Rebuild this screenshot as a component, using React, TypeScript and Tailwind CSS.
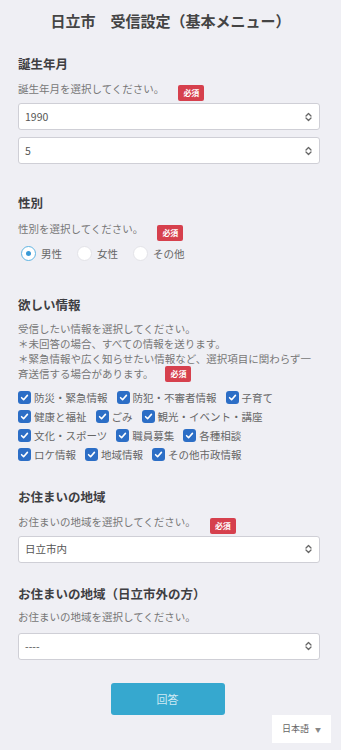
import React from 'react';

const font = "font-['Noto_Sans_CJK_JP','Noto_Sans',sans-serif]";

const Badge: React.FC = () => (
  <span className="inline-flex items-center justify-center h-[16px] w-[26px] rounded-[2px] bg-[#d6404d] text-white text-[8px] font-bold leading-none">
    必須
  </span>
);

const UpDown: React.FC = () => (
  <svg width="7" height="10" viewBox="0 0 7 10" fill="none" stroke="#666" strokeWidth="1.3" strokeLinecap="round" strokeLinejoin="round">
    <path d="M1 4 L3.5 1.5 L6 4" />
    <path d="M1 6 L3.5 8.5 L6 6" />
  </svg>
);

const SelectBox: React.FC<{ value: string; className?: string }> = ({ value, className = '' }) => (
  <div
    className={`flex items-center justify-between h-[27px] w-[302px] bg-white border border-[#cfcfd6] rounded-[3px] pl-[6px] pr-[7px] text-[10.5px] text-[#555] ${className}`}
  >
    <span>{value}</span>
    <UpDown />
  </div>
);

const Heading: React.FC<{ children: React.ReactNode; className?: string }> = ({ children, className = '' }) => (
  <h2 className={`h-[18px] leading-[18px] text-[12.5px] font-bold text-[#3e3e42] ${className}`}>{children}</h2>
);

const Radio: React.FC<{ label: string; checked?: boolean }> = ({ label, checked }) => (
  <label className="flex items-center">
    <span
      className={`flex items-center justify-center w-[15px] h-[15px] rounded-full bg-white border ${
        checked ? 'border-[#5fb4e2] border-[1.5px]' : 'border-[#e3e3e8]'
      }`}
    >
      {checked && <span className="w-[5px] h-[5px] rounded-full bg-[#3a9ad6]" />}
    </span>
    <span className="ml-[5px] text-[10.5px] text-[#666]">{label}</span>
  </label>
);

const Check: React.FC<{ label: string }> = ({ label }) => (
  <label className="flex items-center mr-[9px]">
    <span className="flex items-center justify-center w-[13px] h-[13px] rounded-[3px] bg-[#2c6ec6]">
      <svg width="9" height="9" viewBox="0 0 9 9" fill="none" stroke="white" strokeWidth="1.6" strokeLinecap="round" strokeLinejoin="round">
        <path d="M1.6 4.7 L3.6 6.7 L7.4 2.4" />
      </svg>
    </span>
    <span className="ml-[3px] text-[10.5px] leading-[13px] text-[#666]">{label}</span>
  </label>
);

const rows = [
  ['防災・緊急情報', '防犯・不審者情報', '子育て'],
  ['健康と福祉', 'ごみ', '観光・イベント・講座'],
  ['文化・スポーツ', '職員募集', '各種相談'],
  ['ロケ情報', '地域情報', 'その他市政情報'],
];

export default function App() {
  return (
    <div className={`relative min-h-[750px] w-full bg-[#efeff4] ${font} overflow-hidden`}>
      <h1 className="pt-[11px] h-[31px] leading-[20px] text-center text-[15px] font-bold text-[#444]">
        日立市　受信設定（基本メニュー）
      </h1>

      <div className="px-[18px]">
        {/* 誕生年月 */}
        <Heading className="mt-[24px]">誕生年月</Heading>
        <div className="flex items-center h-[16px] mt-[8px]">
          <span className="text-[10.5px] text-[#777]">誕生年月を選択してください。</span>
          <span className="ml-[14px]"><Badge /></span>
        </div>
        <SelectBox value="1990" className="mt-[6px]" />
        <SelectBox value="5" className="mt-[7px]" />

        {/* 性別 */}
        <Heading className="mt-[30px]">性別</Heading>
        <div className="flex items-center h-[16px] mt-[9px]">
          <span className="text-[10.5px] text-[#777]">性別を選択してください。</span>
          <span className="ml-[14px]"><Badge /></span>
        </div>
        <div className="flex items-center gap-[15px] mt-[9px] ml-[3px]">
          <Radio label="男性" checked />
          <Radio label="女性" />
          <Radio label="その他" />
        </div>

        {/* 欲しい情報 */}
        <Heading className="mt-[34px]">欲しい情報</Heading>
        <div className="mt-[7px] text-[10.5px] leading-[15px] text-[#777]">
          <p>受信したい情報を選択してください。</p>
          <p>＊未回答の場合、すべての情報を送ります。</p>
          <p>＊緊急情報や広く知らせたい情報など、選択項目に関わらず一</p>
          <div className="flex items-center h-[15px]">
            <span>斉送信する場合があります。</span>
            <span className="ml-[12px]"><Badge /></span>
          </div>
        </div>
        <div className="mt-[10px] flex flex-col gap-[6px]">
          {rows.map((r, i) => (
            <div key={i} className="flex items-center">
              {r.map((l) => (
                <Check key={l} label={l} />
              ))}
            </div>
          ))}
        </div>

        {/* お住まいの地域 */}
        <Heading className="mt-[27px]">お住まいの地域</Heading>
        <div className="flex items-center h-[16px] mt-[8px]">
          <span className="text-[10.5px] text-[#777]">お住まいの地域を選択してください。</span>
          <span className="ml-[14px]"><Badge /></span>
        </div>
        <SelectBox value="日立市内" className="mt-[6px]" />

        {/* お住まいの地域（日立市外の方） */}
        <Heading className="mt-[22px]">お住まいの地域（日立市外の方）</Heading>
        <p className="mt-[6px] h-[16px] leading-[16px] text-[10.5px] text-[#777]">お住まいの地域を選択してください。</p>
        <SelectBox value="----" className="mt-[8px]" />

        <div className="flex justify-center mt-[23px] pr-[6px]">
          <button className="w-[114px] h-[32px] rounded-[3px] bg-[#36a8cf] text-[11px] text-[#cfeaf4]">
            回答
          </button>
        </div>
      </div>

      <div className="absolute left-[272px] top-[715px] w-[59px] h-[28px] bg-white flex items-center justify-center gap-[6px]">
        <span className="text-[9px] text-[#666]">日本語</span>
        <span className="text-[6px] text-[#888]">▼</span>
      </div>
    </div>
  );
}
